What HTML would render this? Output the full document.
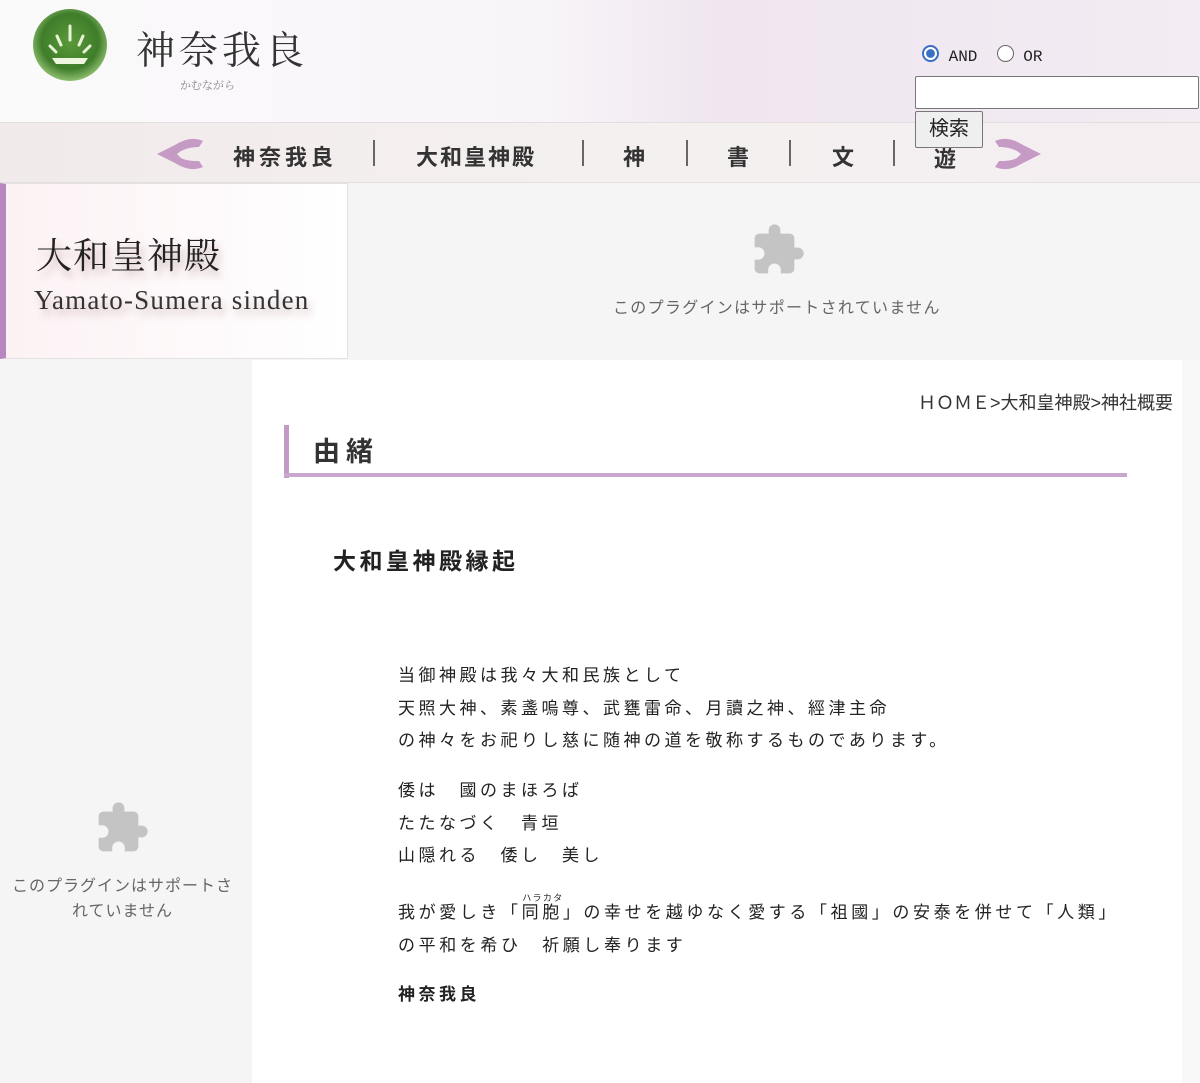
<!DOCTYPE html>
<html><head><meta charset="utf-8">
<style>
*{margin:0;padding:0;box-sizing:border-box}
body{width:1200px;height:1083px;overflow:hidden;background:#f5f5f5;font-family:"Liberation Sans","Noto Sans CJK JP",sans-serif;color:#222;position:relative}
.a{position:absolute;white-space:nowrap}
.serif{font-family:"Liberation Serif","Noto Serif CJK SC",serif}
.nav{font-size:22px;font-weight:bold;color:#333}
</style></head><body>
<div class="a" style="left:0;top:0;width:1200px;height:122px;background:linear-gradient(90deg,#fbfafb 0%,#f8f5f8 45%,#efe6ef 60%,#f3ecf3 100%)"></div>
<svg class="a" style="left:30px;top:6px" width="80" height="80" viewBox="0 0 80 80">
<defs><radialGradient id="g" cx="50%" cy="45%" r="55%"><stop offset="0" stop-color="#5a9a3a"/><stop offset=".7" stop-color="#3f7d2a"/><stop offset="1" stop-color="#8fbf70"/></radialGradient></defs>
<ellipse cx="40" cy="39" rx="37" ry="36" fill="url(#g)"/>
<path d="M40 20v14M27 30l4 9M53 30l-4 9M20 40l6 6M60 40l-6 6" stroke="#e8f3d8" stroke-width="3" stroke-linecap="round"/>
<path d="M22 52h36l-4 6H26z" fill="#eef6e0"/>
</svg>
<div class="a serif" style="left:136px;top:20px;font-size:39px;color:#333;letter-spacing:4px">神奈我良</div>
<div class="a serif" style="left:180px;top:77px;font-size:11px;color:#888">かむながら</div>
<div class="a" style="left:922px;top:45px;font-size:16px;font-family:'Liberation Mono',monospace;color:#222">
<span style="display:inline-block;width:17px;height:17px;border-radius:50%;border:2px solid #3b6fc4;background:radial-gradient(#3b6fc4 45%,#fff 50%);vertical-align:-1px"></span> AND &nbsp;<span style="display:inline-block;width:17px;height:17px;border-radius:50%;border:1px solid #666;background:#fff;vertical-align:-1px"></span> OR</div>
<div class="a" style="left:915px;top:76px;width:284px;height:33px;background:#fff;border:1px solid #777;border-radius:2px"></div>
<div class="a" style="left:915px;top:111px;width:68px;height:37px;background:#efefef;border:1px solid #777;border-radius:2px;font-size:20px;text-align:center;line-height:35px;z-index:3">検索</div>
<div class="a" style="left:0;top:122px;width:1200px;height:61px;background:linear-gradient(90deg,#f1eaea,#f5f0f0 50%,#f4eef0);border-top:1px solid #e6dede;border-bottom:1px solid #e6dede"></div>
<svg class="a" style="left:155px;top:137px" width="50" height="36" viewBox="0 0 50 36"><path d="M48 4C38 0 30 2 20 8L2 17l18 9c10 6 18 8 28 4l-4-6c-6 0-12 0-18-3l-4-4 4-3c6-3 12-4 18-4z" fill="#c59ac5"/></svg>
<svg class="a" style="left:993px;top:137px" width="50" height="36" viewBox="0 0 50 36"><path d="M2 4c10-4 18-2 28 4l18 9-18 9C20 32 12 34 2 30l4-6c6 0 12 0 18-3l4-4-4-3C18 11 12 10 6 10z" fill="#c59ac5"/></svg>
<div class="a nav" style="left:233px;top:140px;letter-spacing:4px">神奈我良</div>
<div class="a" style="left:373px;top:140px;width:2px;height:26px;background:#666"></div>
<div class="a nav" style="left:416px;top:140px;letter-spacing:2px">大和皇神殿</div>
<div class="a" style="left:582px;top:140px;width:2px;height:26px;background:#666"></div>
<div class="a nav" style="left:623px;top:140px">神</div>
<div class="a" style="left:686px;top:140px;width:2px;height:26px;background:#666"></div>
<div class="a nav" style="left:727px;top:140px">書</div>
<div class="a" style="left:789px;top:140px;width:2px;height:26px;background:#666"></div>
<div class="a nav" style="left:832px;top:140px">文</div>
<div class="a" style="left:893px;top:140px;width:2px;height:26px;background:#666"></div>
<div class="a nav" style="left:934px;top:142px">遊</div>
<div class="a" style="left:0;top:183px;width:348px;height:176px;background:linear-gradient(90deg,#fcf2f4,#fff);border:1px solid #e2e2e2;border-left:6px solid #b987bf"></div>
<div class="a serif" style="left:36px;top:228px;font-size:36px;color:#222;letter-spacing:1px;text-shadow:3px 6px 8px rgba(120,60,60,.35)">大和皇神殿</div>
<div class="a serif" style="left:34px;top:285px;font-size:27px;color:#333;letter-spacing:1.2px;text-shadow:3px 6px 8px rgba(120,60,60,.3)">Yamato-Sumera sinden</div>
<svg class="a" style="left:750px;top:222px" width="56" height="56" viewBox="0 0 24 24"><path d="M20.5 11H19V7c0-1.1-.9-2-2-2h-4V3.5a2.5 2.5 0 0 0-5 0V5H4c-1.1 0-2 .9-2 2v3.8h1.5c1.5 0 2.7 1.2 2.7 2.7S5 16.2 3.5 16.2H2V20c0 1.1.9 2 2 2h3.8v-1.5c0-1.5 1.2-2.7 2.7-2.7s2.7 1.2 2.7 2.7V22H17c1.1 0 2-.9 2-2v-4h1.5a2.5 2.5 0 0 0 0-5z" fill="#c4c4c4"/></svg>
<div class="a" style="left:613px;top:294px;font-size:16px;color:#666;letter-spacing:1.3px">このプラグインはサポートされていません</div>
<div class="a" style="left:252px;top:360px;width:930px;height:723px;background:#fff"></div>
<div class="a" style="left:1182px;top:360px;width:18px;height:723px;background:#f8f8f8"></div>
<div class="a" style="right:27px;top:389px;font-size:18px;color:#333">ＨＯＭＥ&gt;大和皇神殿&gt;神社概要</div>
<div class="a" style="left:284px;top:425px;width:5px;height:53px;background:#c29ac6"></div>
<div class="a" style="left:284px;top:473px;width:843px;height:4px;background:#c9a6cb"></div>
<div class="a" style="left:313px;top:430px;font-size:27px;font-weight:bold;color:#333;letter-spacing:6px">由緒</div>
<div class="a" style="left:333px;top:542px;font-size:23px;font-weight:bold;color:#222;letter-spacing:3.5px">大和皇神殿縁起</div>
<div class="a" style="left:398px;top:660px;font-size:17px;line-height:32.5px;color:#222;letter-spacing:3.5px">
当御神殿は我々大和民族として<br>天照大神、素盞嗚尊、武甕雷命、月讀之神、經津主命<br>の神々をお祀りし慈に随神の道を敬称するものであります。</div>
<div class="a" style="left:398px;top:775px;font-size:17px;line-height:32.5px;color:#222;letter-spacing:3.5px">
倭は　國のまほろば<br>たたなづく　青垣<br>山隠れる　倭し　美し</div>
<div class="a" style="left:398px;top:893px;font-size:17px;line-height:32.5px;color:#222;letter-spacing:3.6px">
我が愛しき「<ruby>同胞<rt style="font-size:9px;letter-spacing:0">ハラカタ</rt></ruby>」の幸せを越ゆなく愛する「祖國」の安泰を併せて「人類」<br>の平和を希ひ　祈願し奉ります</div>
<div class="a" style="left:398px;top:980px;font-size:17px;font-weight:bold;color:#222;letter-spacing:3.5px">神奈我良</div>
<svg class="a" style="left:94px;top:800px" width="56" height="56" viewBox="0 0 24 24"><path d="M20.5 11H19V7c0-1.1-.9-2-2-2h-4V3.5a2.5 2.5 0 0 0-5 0V5H4c-1.1 0-2 .9-2 2v3.8h1.5c1.5 0 2.7 1.2 2.7 2.7S5 16.2 3.5 16.2H2V20c0 1.1.9 2 2 2h3.8v-1.5c0-1.5 1.2-2.7 2.7-2.7s2.7 1.2 2.7 2.7V22H17c1.1 0 2-.9 2-2v-4h1.5a2.5 2.5 0 0 0 0-5z" fill="#c4c4c4"/></svg>
<div class="a" style="left:0;top:874px;width:245px;text-align:center;white-space:normal;font-size:16px;line-height:25px;color:#666;letter-spacing:1px">このプラグインはサポートさ<br>れていません</div>
</body></html>
